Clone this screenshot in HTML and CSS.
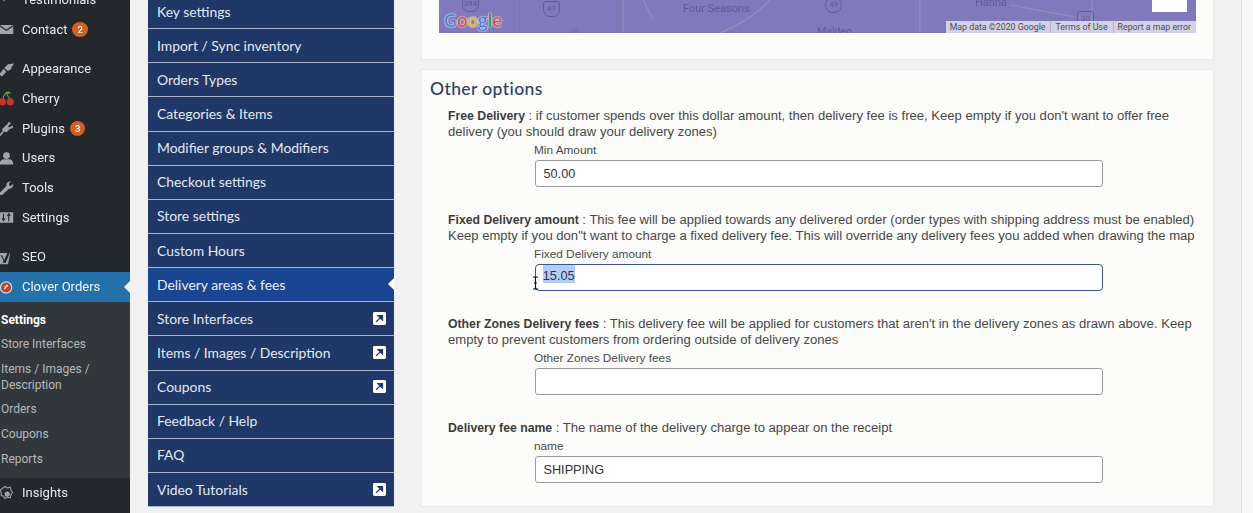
FILE: index.html
```html
<!DOCTYPE html>
<html lang="en">
<head>
<meta charset="utf-8">
<title>Delivery areas &amp; fees</title>
<link rel="stylesheet" href="styles.css">
</head>
<body>
<div class="app">
  <nav class="wp">
    <div class="wp-item first"><svg class="ic" viewBox="0 0 20 20"><path d="M2 1h16v9H9l-3 3v-3H2z" fill="#a0a5aa"/></svg><span>Testimonials</span></div>
    <div class="wp-item"><svg class="ic" viewBox="0 0 20 20"><path d="M1 4h18v12H1z" fill="#a0a5aa"/><path d="M1 5l9 6 9-6" fill="none" stroke="#23282d" stroke-width="1.600"/></svg><span>Contact</span><b class="badge">2</b></div>
    <div class="wp-item gap"><svg class="ic" viewBox="0 0 20 20"><path d="M0 17l6-8 4 4-6 6zM7 8l5-5 8-1-4 6 1 1-5 3z" fill="#a0a5aa"/></svg><span>Appearance</span></div>
    <div class="wp-item"><svg class="ic" viewBox="0 0 20 20"><path d="M5 11q1-6 5-9 1 5 5 9" fill="none" stroke="#6ba544" stroke-width="1.500"/><path d="M9 2q4-3 7 1-4 2-7-1z" fill="#6ba544"/><circle cx="4.500" cy="14.500" r="4.800" fill="#c5352c"/><circle cx="15" cy="14.500" r="4.800" fill="#c5352c"/></svg><span>Cherry</span></div>
    <div class="wp-item"><svg class="ic" viewBox="0 0 20 20"><path d="M0 19l5-6-1-2 6-6 5 5-5 5-3-1-5 6zM10 6l3-5 3 2-4 4zM13 9l5-3 1 3-5 2z" fill="#a0a5aa"/></svg><span>Plugins</span><b class="badge">3</b></div>
    <div class="wp-item"><svg class="ic" viewBox="0 0 20 20"><circle cx="10" cy="6" r="4.500" fill="#a0a5aa"/><path d="M1 18q0-7 6-7h6q6 0 6 7z" fill="#a0a5aa"/></svg><span>Users</span></div>
    <div class="wp-item"><svg class="ic" viewBox="0 0 20 20"><path d="M0 18l10-10q-1-5 4-6l2 0-3 3 1 2 2 1 3-3q1 6-6 7l-10 9z" fill="#a0a5aa"/></svg><span>Tools</span></div>
    <div class="wp-item"><svg class="ic" viewBox="0 0 20 20"><path d="M1 3h18v14H1z" fill="#a0a5aa"/><path d="M6 5v10M4 11l2 3 2-3M13 15V5M11 8l2-3 2 3" fill="none" stroke="#23282d" stroke-width="1.500"/></svg><span>Settings</span></div>
    <div class="wp-item gap"><svg class="ic" viewBox="0 0 20 20"><path d="M0 4h15l-3 15H0z" fill="#a0a5aa"/><path d="M4 7l3 6 5-11 4-2-7 17H5l1-3-4-7z" fill="#23282d"/></svg><span>SEO</span></div>
    <div class="wp-item current"><svg class="ic" viewBox="0 0 20 20"><circle cx="9.500" cy="10" r="7.500" fill="#b9472a" stroke="#d8d8d8" stroke-width="1.500"/><path d="M7 12l5-5M9 7h3M7 9h2" stroke="#eedfd0" stroke-width="1.500"/></svg><span>Clover Orders</span><i class="notch"></i></div>
    <ul class="wp-sub">
      <li class="strong">Settings</li>
      <li>Store Interfaces</li>
      <li>Items / Images / Description</li>
      <li>Orders</li>
      <li>Coupons</li>
      <li>Reports</li>
    </ul>
    <div class="wp-item after"><svg class="ic" viewBox="0 0 20 20"><path d="M8 2l3 2 4-1 1 4 2 3-2 3-1 4-4-1-3 2-2-3-3-1 0-4-2-3 3-2z" fill="none" stroke="#a0a5aa" stroke-width="1.400"/><circle cx="11" cy="12" r="3.500" fill="#a0a5aa"/></svg><span>Insights</span></div>
  </nav>

  <main class="page">
    <aside class="tabs">
      <a class="tab">Key settings</a>
      <a class="tab">Import / Sync inventory</a>
      <a class="tab">Orders Types</a>
      <a class="tab">Categories &amp; Items</a>
      <a class="tab">Modifier groups &amp; Modifiers</a>
      <a class="tab">Checkout settings</a>
      <a class="tab">Store settings</a>
      <a class="tab">Custom Hours</a>
      <a class="tab active">Delivery areas &amp; fees<i class="tab-notch"></i></a>
      <a class="tab">Store Interfaces<svg class="ext" viewBox="0 0 14 14"><rect width="14" height="14" rx="1.500" fill="#fff"/><path d="M3.500 10.500l5-5M5.500 3.800h4.700v4.700z" stroke="#1f3868" stroke-width="1.400" fill="#1f3868"/></svg></a>
      <a class="tab">Items / Images / Description<svg class="ext" viewBox="0 0 14 14"><rect width="14" height="14" rx="1.500" fill="#fff"/><path d="M3.500 10.500l5-5M5.500 3.800h4.700v4.700z" stroke="#1f3868" stroke-width="1.400" fill="#1f3868"/></svg></a>
      <a class="tab">Coupons<svg class="ext" viewBox="0 0 14 14"><rect width="14" height="14" rx="1.500" fill="#fff"/><path d="M3.500 10.500l5-5M5.500 3.800h4.700v4.700z" stroke="#1f3868" stroke-width="1.400" fill="#1f3868"/></svg></a>
      <a class="tab">Feedback / Help</a>
      <a class="tab">FAQ</a>
      <a class="tab">Video Tutorials<svg class="ext" viewBox="0 0 14 14"><rect width="14" height="14" rx="1.500" fill="#fff"/><path d="M3.500 10.500l5-5M5.500 3.800h4.700v4.700z" stroke="#1f3868" stroke-width="1.400" fill="#1f3868"/></svg></a>
    </aside>

    <section class="content">
      <div class="card map-card">
        <div class="map">
          <svg class="roads" viewBox="0 0 757 33" preserveAspectRatio="none">
            <path d="M78 0v33" fill="none" stroke="#8f88bd" stroke-width="1" stroke-dasharray="2 2"/>
            <path d="M184 0v33M204 0l10 20M481 0v33M653 0v33" fill="none" stroke="#958bb8" stroke-width="1.200"/>
            <path d="M571 5l65 12 16 1M281 33q30-12 50-33" fill="none" stroke="#9a8cb4" stroke-width="1.200"/>
            <circle cx="136" cy="33" r="4.500" fill="#6a74cf"/>
          </svg>
          <span class="shield s394">394</span>
          <span class="shield s41">41</span>
          <span class="shield s49">49</span>
          <span class="shield s30">30</span>
          <span class="place p1">Crown Point</span>
          <span class="place p2">Lakes of the<br>Four Seasons</span>
          <span class="place p3">Hanna</span>
          <span class="place p4">Malden</span>
          <span class="google"><b class="gb">G</b><b class="gr">o</b><b class="gy">o</b><b class="gb">g</b><b class="gg">l</b><b class="gr">e</b></span>
          <span class="zoom-box"></span>
          <div class="attrib"><span>Map data ©2020 Google</span><span>Terms of Use</span><span>Report a map error</span></div>
        </div>
      </div>

      <div class="card options">
        <h2>Other options</h2>
        <div class="opt">
          <p><b>Free Delivery</b> : if customer spends over this dollar amount, then delivery fee is free, Keep empty if you don't want to offer free delivery (you should draw your delivery zones)</p>
          <label>Min Amount</label>
          <div class="field">50.00</div>
        </div>
        <div class="opt">
          <p><b>Fixed Delivery amount</b> : This fee will be applied towards any delivered order (order types with shipping address must be enabled) Keep empty if you don"t want to charge a fixed delivery fee. This will override any delivery fees you added when drawing the map</p>
          <label>Fixed Delivery amount</label>
          <div class="field focus"><mark>15.05</mark><svg class="cursor" viewBox="0 0 7 14"><path d="M1 1h2l.5 1L4 1h2M3.500 2v10M1 13h2l.5-1 .5 1h2M2 7h3" fill="none" stroke="#111" stroke-width="1.100"/></svg></div>
        </div>
        <div class="opt">
          <p><b>Other Zones Delivery fees</b> : This delivery fee will be applied for customers that aren't in the delivery zones as drawn above. Keep empty to prevent customers from ordering outside of delivery zones</p>
          <label>Other Zones Delivery fees</label>
          <div class="field"></div>
        </div>
        <div class="opt">
          <p><b>Delivery fee name</b> : The name of the delivery charge to appear on the receipt</p>
          <label>name</label>
          <div class="field">SHIPPING</div>
        </div>
      </div>
    </section>
  </main>
  <div class="scroll"></div>
</div>
</body>
</html>
```
FILE: styles.css
```css
* { box-sizing: border-box; }
html, body { margin: 0; height: 513px; overflow: hidden; }
body { background: #f1f1f1; font-family: "Liberation Sans", Arial, sans-serif; color: #444; }
.app { display: flex; height: 513px; overflow: hidden; filter: blur(.35px); }

/* WordPress admin sidebar */
.wp { width: 130px; flex: none; background: #23282d; height: 513px; font: 13px/18px Roboto, "Open Sans", sans-serif; color: #e6e8ea; overflow: hidden; }
.wp-item { height: 29.700px; display: flex; align-items: center; position: relative; white-space: nowrap; }
.wp-item.first { margin-top: -15px; }
.wp-item.gap { margin-top: 10px; }
.ic { width: 15px; height: 15px; margin: 0 8px 0 -1px; flex: none; }
.badge { width: 15.500px; height: 15.500px; border-radius: 50%; background: #d2601f; color: #fff; font: 500 9.500px/15.500px Roboto, sans-serif; text-align: center; margin-left: 5px; }
.wp-item.current { background: #2271a8; height: 30px; color: #f2f5f8; }
.notch { position: absolute; right: 0; top: 9px; border: 6px solid transparent; border-right-color: #f1f1f1; border-left-width: 0; }
.wp-sub { list-style: none; margin: 0; padding: 6px 0 6px 1px; background: #32373c; color: #b4b9be; font-size: 12px; line-height: 15.500px; }
.wp-sub li { padding: 4.600px 0; }
.wp-sub li.strong { color: #fff; font-weight: 700; }
.wp-item.after { height: 30px; }

/* Plugin page */
.page { flex: none; width: 1111px; padding-left: 18px; display: flex; gap: 27px; align-items: flex-start; }
.tabs { width: 246px; flex: none; margin-top: -5px; display: flex; flex-direction: column; }
.tab { height: 34.150px; display: flex; align-items: center; justify-content: space-between; position: relative; padding: 0 8px 0 9px; background: #1f3868; color: #e4e8f0; border-bottom: 1.500px solid #a9b5cc; font: 13.900px/18px Lato, "Open Sans", sans-serif; white-space: nowrap; }
.tab.active { background: #1a4591; color: #e9edf5; }
.tab-notch { position: absolute; right: 0; top: 10px; border: 6px solid transparent; border-right-color: #fff; border-left-width: 0; }
.ext { width: 13px; height: 13px; flex: none; margin-top: -1px; }

.content { width: 793px; flex: none; margin-top: -11px; display: flex; flex-direction: column; gap: 9px; }
.card { background: #fcfcfb; border: 1px solid #e8e8e8; }
.map-card { height: 71px; padding: 0 17px; }
.map { height: 43px; background: #8079bc; position: relative; overflow: hidden; color: #5e5a9a; font: 10.500px/12px Roboto, sans-serif; }
.roads { position: absolute; left: 0; top: 10px; width: 100%; height: 33px; }
.shield { position: absolute; top: 11px; width: 17px; height: 16px; border: 1px solid #615ca0; border-radius: 3px 3px 7px 7px; font-size: 8px; line-height: 14px; text-align: center; }
.s394 { left: 23px; top: 6px; }
.s41 { left: 104px; }
.s49 { left: 386px; top: 7px; border-radius: 8px; }
.s30 { left: 638px; top: 21px; }
.place { position: absolute; white-space: nowrap; }
.p1 { left: 178px; top: -1px; }
.p2 { left: 244px; top: 1px; text-align: center; font-size: 11px; }
.p3 { left: 536px; top: 7px; font-size: 11px; }
.p4 { left: 378px; top: 36px; }
.google { position: absolute; left: 5px; top: 19px; font: 700 18px/22px "Open Sans", sans-serif; letter-spacing: -.4px; text-shadow: 0 0 1px #fff, 0 0 2px #fff; }
.google b { font-weight: 600; }
.gb { color: #4a80d8; }
.gr { color: #d8533f; }
.gy { color: #dfae35; }
.gg { color: #47a055; }
.zoom-box { position: absolute; right: 9px; top: 0; width: 35px; height: 22px; background: #fff; }
.attrib { position: absolute; right: 0; bottom: 0; height: 12px; display: flex; background: #d3d1e6; color: #4c4c55; font: 8.800px/12px Roboto, sans-serif; }
.attrib span { padding: 0 5px 0 4px; border-left: 1px solid #b4b1d0; white-space: nowrap; }
.attrib span:first-child { border-left: 0; }

.options { height: 438px; padding: 8px 15px 0 8px; }
h2 { margin: 0 0 8px; font: 500 17.500px/22px Lato, "Open Sans", sans-serif; color: #2a4169; letter-spacing: .4px; }
.opt { padding-left: 18px; margin-bottom: 25px; }
.opt p { margin: 0; font-size: 13.080px; line-height: 16px; color: #484848; }
.opt p b { font-size: 12.250px; font-weight: 700; color: #3c3c3c; }
.opt label { display: block; margin: 2px 0 0 86px; font-size: 11.800px; line-height: 16px; color: #4a4a4a; }
.field { position: relative; margin: 2px 0 0 87px; width: 568px; height: 27px; border: 1.300px solid #9a9a9a; border-radius: 3px; background: #fff; padding-left: 7.500px; font-size: 12.700px; line-height: 26px; color: #333; }
.field.focus { border: 1.700px solid #3d5590; border-radius: 4px; padding-left: 6.800px; line-height: 23px; }
mark { background: #b3cef5; color: #2a3550; display: inline-block; height: 18px; line-height: 22px; vertical-align: top; }
.cursor { position: absolute; left: -4px; top: 11px; width: 7px; height: 14px; }

.scroll { flex: none; width: 12px; height: 513px; background: #f7f7f7; border-left: 1px solid #dcdcdc; }
```
